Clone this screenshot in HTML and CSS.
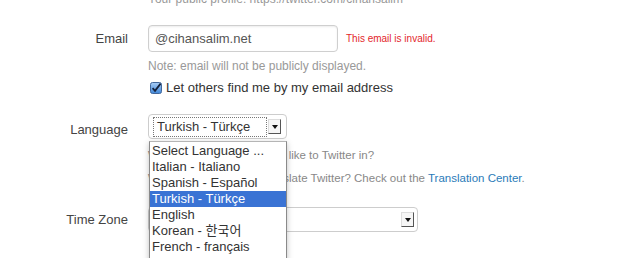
FILE: index.html
```html
<!DOCTYPE html>
<html lang="en">

<head>
  <meta charset="UTF-8">
  <meta name="viewport" content="width=device-width, initial-scale=1">
  <title>Account settings</title>
  <link rel="stylesheet" href="styles.css">
</head>

<body>
  <div class="settings">
    <p class="profile-url">Your public profile: https://twitter.com/cihansalim</p>

    <div class="field email-field">
      <label class="field-label" for="email">Email</label>
      <div class="field-control">
        <div class="input-line">
          <input type="text" id="email" class="text-input" value="@cihansalim.net" readonly>
          <span class="error">This email is invalid.</span>
        </div>
        <p class="note">Note: email will not be publicly displayed.</p>
        <label class="check">
          <span class="checkbox">
            <svg width="12" height="12" viewBox="0 0 12 12">
              <defs>
                <linearGradient id="cb" x1="0" y1="0" x2="0" y2="1">
                  <stop offset="0" stop-color="#a9cdf5" />
                  <stop offset="1" stop-color="#3f86d8" />
                </linearGradient>
              </defs>
              <rect x="0.5" y="0.5" width="11" height="11" rx="2" fill="url(#cb)" stroke="#41679b" />
              <path d="M2.6 6.2 L5 8.8 L10.6 1.6" fill="none" stroke="#14213a" stroke-width="1.8" />
            </svg>
          </span>
          Let others find me by my email address
        </label>
      </div>
    </div>

    <div class="field language-field">
      <label class="field-label">Language</label>
      <div class="field-control">
        <div class="select-wrap">
          <div class="fake-select lang-select">
            <span class="select-value">Turkish - Türkçe</span>
            <span class="select-btn"><i></i></span>
          </div>
          <ul class="dropdown">
            <li>Select Language ...</li>
            <li>Italian - Italiano</li>
            <li>Spanish - Español</li>
            <li class="selected">Turkish - Türkçe</li>
            <li>English</li>
            <li>Korean - 한국어</li>
            <li>French - français</li>
          </ul>
        </div>
        <p class="hint">Which language would you like to Twitter in?</p>
        <p class="hint">Would you like to help translate Twitter? Check out the <a href="#">Translation Center</a>.</p>
      </div>
    </div>

    <div class="field tz-field">
      <label class="field-label">Time Zone</label>
      <div class="field-control">
        <div class="fake-select tz-select">
          <span class="select-value"></span>
          <span class="select-btn"><i></i></span>
        </div>
      </div>
    </div>
  </div>
</body>

</html>
```

FILE: styles.css
```css
body {
  min-height: 258px;
  margin: 0;
  background: #fff;
  color: #444;
  font-family: "Liberation Sans", Arial, "Noto Sans CJK KR", sans-serif;
  font-size: 13px;
}

* {
  box-sizing: border-box;
}

p {
  margin: 0;
}

.settings {
  overflow: hidden;
  height: 258px;
}

.profile-url {
  margin: -8px 0 0 148px;
  line-height: 14px;
  font-size: 12px;
  color: #999;
}

.field {
  display: grid;
  grid-template-columns: 128px 270px;
  column-gap: 20px;
}

.field-label {
  text-align: right;
  color: #444;
}

.field-control {
  display: flex;
  flex-direction: column;
}

/* email */
.email-field {
  margin-top: 19px;
}

.email-field .field-label {
  line-height: 27px;
}

.input-line {
  display: flex;
  align-items: center;
  gap: 8px;
  white-space: nowrap;
}

.text-input {
  width: 219px;
  height: 27px;
  margin: 0;
  padding: 0 6px;
  border: 1px solid #cfcfcf;
  border-radius: 4px;
  box-shadow: inset 0 1px 2px rgba(0, 0, 0, 0.08);
  color: #555;
  font-family: inherit;
  font-size: 13px;
  outline: none;
}

.error {
  color: #e3262b;
  font-size: 10px;
}

.note {
  margin-top: 6px;
  line-height: 16px;
  font-size: 12px;
  color: #999;
  white-space: nowrap;
}

.check {
  display: flex;
  align-items: center;
  gap: 4px;
  margin-top: 5px;
  padding-left: 2px;
  line-height: 18px;
  color: #333;
  white-space: nowrap;
}

.checkbox {
  display: flex;
  width: 12px;
  height: 12px;
}

/* selects */
.fake-select {
  display: flex;
  align-items: center;
  height: 25px;
  padding: 0 5px 0 4px;
  border: 1px solid #cdcdcd;
  border-radius: 4px;
  background: #fff;
}

.select-value {
  flex: 1;
  height: 20px;
  padding-left: 3px;
  line-height: 18px;
  color: #333;
  white-space: nowrap;
}

.lang-select .select-value {
  border: 1px dotted #777;
}

.select-btn {
  display: flex;
  align-items: center;
  justify-content: center;
  width: 13px;
  height: 15px;
  margin-left: 1px;
  border: 1px solid #ddd;
  border-right-color: #555;
  border-bottom-color: #555;
  background: #f6f6f6;
}

.select-btn i {
  width: 0;
  height: 0;
  border-left: 3.5px solid transparent;
  border-right: 3.5px solid transparent;
  border-top: 4px solid #111;
}

/* language */
.language-field {
  margin-top: 17px;
}

.language-field .field-label {
  padding-top: 3px;
  line-height: 25px;
}

.select-wrap {
  position: relative;
  width: 139px;
}

.dropdown {
  position: absolute;
  top: 27px;
  left: 1px;
  z-index: 2;
  width: 138px;
  height: 120px;
  margin: 0;
  padding: 1px 0 0;
  list-style: none;
  background: #fff;
  border: 1px solid #8a8a8a;
  border-top-color: #b5b5b5;
  border-bottom: 0;
  box-shadow: 0 2px 6px rgba(0, 0, 0, 0.25);
}

.dropdown li {
  height: 16px;
  padding-left: 2px;
  line-height: 16px;
  color: #333;
  white-space: nowrap;
}

.dropdown .selected {
  background: #3a73d4;
  color: #fff;
}

.hint {
  line-height: 16px;
  font-size: 11.5px;
  color: #888;
  white-space: nowrap;
}

.hint:first-of-type {
  margin-top: 8px;
}

.hint + .hint {
  margin-top: 7px;
}

.hint a {
  color: #2b7bb9;
  text-decoration: none;
}

/* time zone */
.tz-field {
  margin-top: 21px;
}

.tz-field .field-label {
  line-height: 25px;
}

.tz-select {
  width: 270px;
  padding-right: 3px;
}
```
